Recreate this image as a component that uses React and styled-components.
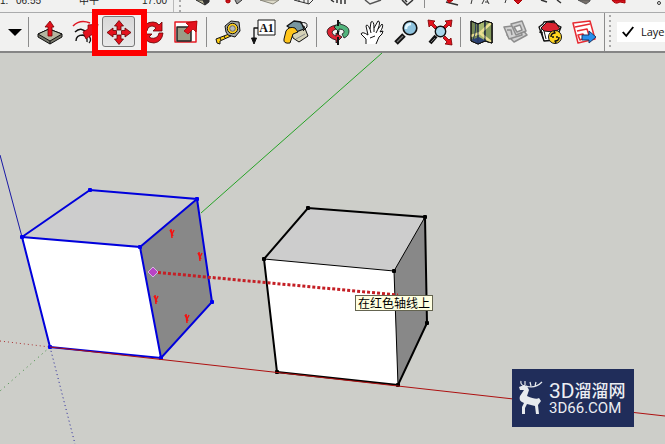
import styled, { createGlobalStyle } from 'styled-components';

const GlobalStyle = createGlobalStyle`
  * {
    box-sizing: border-box;
  }

  body {
    margin: 0;
    background-color: #cdcec9;
    font-family: "Liberation Sans", "Noto Sans CJK SC", sans-serif;
  }
`;

const Window = styled.div`
  min-height: 100vh;
  display: flex;
  flex-direction: column;
  overflow: hidden;
`;

const TopStrip = styled.div`
  height: 13px;
  display: flex;
  align-items: flex-end;
  overflow: hidden;
  background-color: #f1f1f0;
  border-bottom: 1px solid #aaabac;
`;

const TimeScale = styled.div`
  width: 174px;
  height: 12px;
  padding-bottom: 5px;
  flex-shrink: 0;

  display: grid;
  grid-template-columns: 16px 63px 63px auto;
  grid-auto-rows: 12px;
  align-content: end;

  border-right: 1px solid #b9b9b9;
  color: #222;
  font-size: 10px;
  line-height: 12px;
`;

const StripIcons = styled.svg`
  width: 480px;
  height: 12px;
  margin-left: 11px;
  flex-shrink: 0;
`;

const Toolbar = styled.div`
  height: 40px;
  display: flex;
  align-items: center;
  background-color: #f1f1f0;
  border-bottom: 2px solid #858585;
`;

const Separator = styled.div`
  width: 1px;
  height: ${(props) => (props.$full ? '38px' : '30px')};
  margin: 0px 4px 0px 3px;
  flex-shrink: 0;
  background-color: #8c8c8c;
`;

const Grip = styled.div`
  width: 2px;
  height: ${(props) => (props.$short ? '12px' : '34px')};
  margin-left: ${(props) => (props.$short ? '5px' : '0px')};
  flex-shrink: 0;
  background: repeating-linear-gradient(#aaa 0px 2px, #f1f1f0 2px 5px);
`;

const ToolBtn = styled.button`
  width: 34px;
  height: 34px;
  padding: 0px;
  flex-shrink: 0;
  position: relative;

  display: flex;
  justify-content: center;
  align-items: center;

  border: none;
  background-color: transparent;
  cursor: pointer;

  svg {
    width: 28px;
    height: 28px;
    overflow: visible;
  }
`;

const ArrowBtn = styled(ToolBtn)`
  width: 25px;
  padding-left: 5px;

  svg {
    width: 14px;
    height: 8px;
  }
`;

const ActiveBtn = styled(ToolBtn)`
  padding-left: 2px;

  &::before {
    content: '';
    position: absolute;
    inset: 1px 0px 2px 1px;
    border: 1px solid #777;
    border-radius: 3px;
    background: linear-gradient(#d8d8d8, #e8e8e8);
  }

  svg {
    position: relative;
  }
`;

const Highlight = styled.span`
  position: absolute;
  inset: -6px -12px -7px -9px;
  z-index: 1;
  border: 6px solid #fe0000;
`;

const LayerBox = styled.label`
  height: 20px;
  margin-left: 6px;
  padding-left: 5px;
  flex: 1;
  min-width: 0;
  overflow: hidden;

  display: flex;
  align-items: center;
  gap: 7px;

  background-color: white;
  color: #111;
  font-family: "Open Sans", sans-serif;
  font-size: 11px;
  line-height: 20px;
`;

const TickBox = styled.input`
  appearance: none;
  width: 12px;
  height: 12px;
  margin: 0px;
  flex-shrink: 0;

  &:checked::before {
    content: '';
    display: block;
    width: 12px;
    height: 12px;
    background-color: black;
    clip-path: polygon(0% 55%, 14% 45%, 34% 70%, 88% 4%, 100% 12%, 36% 94%);
  }
`;

const Viewport = styled.main`
  position: relative;
  flex: 1;
  overflow: hidden;
`;

const Scene = styled.svg`
  width: 100%;
  height: auto;
  display: block;
`;

const Tooltip = styled.div.attrs({ role: 'tooltip' })`
  position: absolute;
  top: 242px;
  left: 355px;
  padding: 0px 2px;
  border: 1px solid #646450;
  background-color: #ffffe1;
  color: black;
  font-family: "Noto Sans CJK SC", sans-serif;
  font-size: 12px;
  line-height: 14px;
  white-space: nowrap;
`;

const Watermark = styled.div`
  position: absolute;
  right: 31px;
  bottom: 17px;
  width: 122px;
  height: 58px;
  padding-left: 5px;

  display: flex;
  align-items: center;
  gap: 5px;

  background-color: #202d5a;
  color: #eceef2;

  svg {
    width: 27px;
    height: 36px;
    flex-shrink: 0;
  }
`;

const Brand = styled.div`
  padding-top: 2px;
  font-family: Roboto, "Noto Sans CJK SC", sans-serif;
  white-space: nowrap;
`;

const BrandName = styled.div`
  display: flex;
  align-items: center;
  font-size: 17px;
  font-weight: 500;
  line-height: 18px;
`;

const BrandLatin = styled.span`
  font-size: 21px;
  font-weight: 400;
`;

const BrandUrl = styled.div`
  font-size: 15px;
  line-height: 16px;
`;

const Icon = ({ children }) => (
  <svg viewBox="0 0 28 28" fill="none" stroke="#111" strokeWidth="1" strokeLinejoin="round">
    {children}
  </svg>
);

const PushPull = () => (
  <Icon>
    <path d="M2 16 13 11 26 16V19L14 26 2 19Z" fill="#77776a" />
    <path d="M2 16 13 11 26 16 14 23Z" fill="#b5b5a0" />
    <path d="M14 23V26" />
    <path d="M12 18V9H9L14 3 18 9H16V18Z" fill="#e3121d" stroke="#700" strokeWidth="0.8" />
  </Icon>
);

const FollowMe = () => (
  <Icon>
    <path d="M3 8Q10 1 20 5" stroke="#df1722" strokeWidth="1.6" />
    <path d="M5 14Q11 8 17 15T19 25M6 23Q6 17 13 17Q18 19 17 24" strokeWidth="1.4" />
    <path d="M13 14 18 11 18 7 28 6 26 17 21 17 16 21Z" fill="#e3121d" stroke="#8a0008" strokeWidth="0.8" />
  </Icon>
);

const Move = () => (
  <Icon>
    <g fill="#e3121d" stroke="#600" strokeWidth="0.8">
      <path d="M12 12V8H9.500L14 2.500 18.500 8H16V12Z" />
      <path d="M12 17V21H9.500L14 26.500 18.500 21H16V17Z" />
      <path d="M11.500 12.500H8V10L2 14.500 8 19V16.500H11.500Z" />
      <path d="M16.500 12.500H20V10L26 14.500 20 19V16.500H16.500Z" />
    </g>
  </Icon>
);

const Rotate = () => (
  <Icon>
    <g fill="#e3121d" stroke="#600" strokeWidth="0.8">
      <path d="M5 13Q6 4 15 4Q19 4 21 7L24 4V13H15L18 10Q14 6 10 10L9 13Z" />
      <path d="M25 15Q24 24 16 25Q11 25 8 22L5 25V16H14L11 19Q16 22 20 18L21 15Z" />
    </g>
  </Icon>
);

const Scale = () => (
  <Icon>
    <path d="M3 4H24V24H3Z" fill="#fff" stroke="#e51b24" strokeWidth="1.5" />
    <path d="M5 9H19V23H5Z" fill="#9b9c86" stroke="#222" strokeWidth="1.5" />
    <path d="M12 13 17 8 14 5 25 3 24 14 21 11 16 16Z" fill="#e3121d" stroke="#a00" strokeWidth="0.8" />
  </Icon>
);

const Tape = () => (
  <Icon>
    <path d="M2 21 15 16 17 18 6 23 6 26 3 25Z" fill="#ffcf16" />
    <path d="M6 20 7 22M10 18 11 20" />
    <path d="M11 8 17 3 25 4 26 13 21 19 14 17 12 14Z" fill="#a6aaa8" />
    <circle cx="18.500" cy="10.500" r="5.200" fill="#ffcf16" />
    <circle cx="18.500" cy="10.500" r="2.800" fill="#b5b9bb" stroke="#666" />
  </Icon>
);

const TextTool = () => (
  <Icon>
    <path d="M10 2H27V17H10Z" fill="#fff" />
    <path d="M10 10H6V21" strokeWidth="1.3" />
    <path d="M3.500 20H8.500L6 26Z" fill="#111" />
    <text x="18.500" y="14" textAnchor="middle" fill="#111" stroke="none" fontFamily="Liberation Serif, serif" fontSize="12" fontWeight="bold">A1</text>
  </Icon>
);

const Paint = () => (
  <Icon>
    <path d="M9 12 22 8 26 18 17 24 11 20Z" fill="#d5d2b6" />
    <path d="M5 8 12 3 19 4 22 11 14 14Z" fill="#7897a0" strokeWidth="1.3" />
    <path d="M18 5Q26 3 25 9L21 13" />
    <path d="M4 13Q7 8 13 10L16 14 11 16 8 25Q1 26 2 21Z" fill="#ffc51b" />
    <path d="M14 21 23 16" stroke="#888" />
  </Icon>
);

const Orbit = () => (
  <Icon>
    <path d="M14 2V27" strokeWidth="2" />
    <path d="M12 7Q3 9 3 14Q4 20 12 22V25L18 19 12 15V18Q8 17 8 14Q9 12 12 11Z" fill="#dc2332" strokeWidth="0.8" />
    <path d="M16 6Q25 8 25 13Q25 18 20 20L18 16Q21 15 20 13Q19 11 15 11V14L10 9 16 4Z" fill="#51b47c" strokeWidth="0.8" />
    <path d="M14 2V8M14 19V27" strokeWidth="2" />
  </Icon>
);

const Pan = () => (
  <Icon>
    <path d="M8 26 8 21 3 16Q4 13 10 17L8 8Q9 5 12 11L13 4Q16 2 16 10L20 3Q23 3 20 11L24 6Q26 8 22 14L25 13Q25 16 21 19L18 26" fill="#fff" />
    <path d="M12 11 13 15M16 10V14M20 11 18 15M12 20 17 18" />
  </Icon>
);

const Zoom = () => (
  <Icon>
    <path d="M12 17 4 25" strokeWidth="5" />
    <path d="M11 18 5 24" stroke="#777" strokeWidth="1.5" />
    <circle cx="18" cy="10" r="6.800" fill="#8fc3de" strokeWidth="1.600" />
    <path d="M14 11Q14 6 19 6" stroke="#e4f8ff" strokeWidth="2.500" />
  </Icon>
);

const ZoomExtents = () => (
  <Icon>
    <g fill="#e3121d" stroke="#700" strokeWidth="0.8">
      <path d="M2 2 9 3 7 5 11 9 9 11 5 7 3 9Z" />
      <path d="M26 2 19 3 21 5 17 9 19 11 23 7 25 9Z" />
      <path d="M26 27 19 26 21 24 17 20 19 18 23 22 25 20Z" />
    </g>
    <path d="M10 18 4 25" strokeWidth="4" />
    <path d="M9 20 5 24" stroke="#777" />
    <circle cx="14.500" cy="13.500" r="5.200" fill="#a9d7eb" strokeWidth="1.400" />
  </Icon>
);

const MapIcon = () => (
  <Icon>
    <path d="M3 3 10 6 17 3 24 5V25L17 23 10 26 3 23Z" fill="#758754" />
    <path d="M10 6 17 3V23L10 26Z" fill="#a5b66f" />
    <path d="M17 3 24 5V25L17 23Z" fill="#83995c" />
    <path d="M23 5 12 15 23 24M3 18 12 15" stroke="#eadf91" strokeWidth="2.500" />
    <path d="M3 22 11 19 20 24 17 23 10 26Z" fill="#2c4274" stroke="none" />
    <path d="M7 4Q9 11 5 22M10 6V26M17 3V23" stroke="#26375c" />
    <path d="M3 3 10 6 17 3 24 5V25L17 23 10 26 3 23Z" />
  </Icon>
);

const Layouts = () => (
  <Icon>
    <g fill="#d2d2d2" stroke="#8d8d8d" strokeWidth="1.500">
      <path d="M5 17 19 10 25 17 12 24Z" />
      <path d="M2 9 17 7 20 17 7 21Z" />
      <path d="M9 6 20 3 24 13 14 17Z" />
      <path d="M12 9 18 7 20 12 15 14Z" fill="#f1f1f0" />
      <path d="M5 12H9L10 17" />
    </g>
  </Icon>
);

const Warehouse = () => (
  <Icon>
    <path d="M3 9 7 6 8 4 18 3 19 6 25 9 20 22 8 23Z" fill="#fff" strokeWidth="1.300" />
    <path d="M5 10 11 4 20 5 24 11 18 14 8 13Z" fill="#da2331" />
    <path d="M5 11 8 23M8 13 10 21M3 14 7 15" />
    <circle cx="19" cy="19" r="6.500" fill="#ffd51f" />
    <path d="M15 19Q15 15 19 15L18 13M23 19Q23 23 19 23L20 25M16 19H18M20 19H22" strokeWidth="1.500" />
  </Icon>
);

const SendLayout = () => (
  <Icon>
    <path d="M3 5 20 3 25 21 8 25Z" fill="#fff" stroke="#e72a31" strokeWidth="1.500" />
    <path d="M5 9 20 6M7 13 17 11 19 17M8 17 13 16 15 20 10 22Z" stroke="#e72a31" strokeWidth="1.600" />
    <path d="M12 17H19V13L26 19 19 25V22H12Z" fill="#2790ed" stroke="#173b69" />
  </Icon>
);

const tools = [
  [
    { name: 'Push/Pull', Art: PushPull },
    { name: 'Follow Me', Art: FollowMe },
    { name: 'Move', Art: Move, active: true },
    { name: 'Rotate', Art: Rotate },
    { name: 'Scale', Art: Scale },
  ],
  [
    { name: 'Tape Measure', Art: Tape },
    { name: 'Text', Art: TextTool },
    { name: 'Paint Bucket', Art: Paint },
  ],
  [
    { name: 'Orbit', Art: Orbit },
    { name: 'Pan', Art: Pan },
    { name: 'Zoom', Art: Zoom },
    { name: 'Zoom Extents', Art: ZoomExtents },
  ],
  [
    { name: 'Add Location', Art: MapIcon },
    { name: 'Get Models', Art: Layouts },
    { name: 'Extension Warehouse', Art: Warehouse },
    { name: 'Send to LayOut', Art: SendLayout },
  ],
];

const ToolGroup = ({ items }) => (
  <>
    {items.map(({ name, Art, active }) =>
      active ? (
        <ActiveBtn key={name} aria-label={name} aria-pressed="true">
          <Art />
          <Highlight />
        </ActiveBtn>
      ) : (
        <ToolBtn key={name} aria-label={name}>
          <Art />
        </ToolBtn>
      )
    )}
  </>
);

// lower edges of the icons in the row above
const StripArt = () => (
  <StripIcons viewBox="192 0 480 12" fill="none" stroke="#333" strokeWidth="1">
    <path d="M196 0 205 5 209 0Z" fill="#b9b596" />
    <path d="M203 0 205 5 209 2V0Z" fill="#333" />
    <path d="M226 0V2Q228 4 230 2V0Z" fill="#d31421" stroke="#a00" />
    <path d="M235 0 237 4 242 0" fill="#999" />
    <path d="M260 0 273 4 279 0Z" fill="#dcd9c8" stroke="#88867a" />
    <path d="M294 0 309 4 313 0M299 0V2M304 0V3M308 0V4" />
    <path d="M331 0 334 2M337 0V3M341 0V4M345 0V4" strokeWidth="1.500" />
    <path d="M365 0 370 4 381 0" stroke="#555" strokeWidth="1.500" />
    <path d="M402 0 407 5 413 0M405 0 407 2" strokeWidth="1.500" />
    <path d="M424.500 0V8" stroke="#8c8c8c" />
    <path d="M446 2 458 5" strokeWidth="1.500" />
    <path d="M447 0 449 3 453 0Z" fill="#d31421" stroke="#a00" />
    <path d="M472 0 471 4M484 0 482 4M487 0 489 4M485 2H488" />
    <path d="M506 0 505 3" />
    <path d="M514 0 518 4 522 0Z" fill="#d31421" stroke="#a00" />
    <path d="M541 0 547 2M557 0 561 3" strokeWidth="1.500" />
    <path d="M578 0 586 4 590 1V0Z" fill="#77706a" stroke="#555" />
    <path d="M612 0Q615 5 620 2L625 3V0Z" fill="#d31421" stroke="#a00" />
    <circle cx="659" cy="3" r="1.500" />
  </StripIcons>
);

const Corners = ({ points, color }) => (
  <g fill={color}>
    {points.map(([x, y]) => (
      <rect key={`${x}-${y}`} x={x - 2} y={y - 2} width="4" height="4" rx="1" />
    ))}
  </g>
);

const Model = () => (
  <Scene viewBox="0 53 665 391" fill="none">
    <path d="M382 53 201 213" stroke="#26a326" />
    <path d="M0 155 22 237" stroke="#1919a5" />
    <path d="M0 341 50 347" stroke="#a33" strokeDasharray="1 3" />
    <path d="M50 347 0 391" stroke="#388838" strokeDasharray="1 4" />
    <path d="M50 347 75 444" stroke="#22229a" strokeDasharray="1 3" />

    <path d="M22 237 90 190 197 199 140 247Z" fill="#cdcdcd" />
    <path d="M22 237 140 247 161 358 50 347Z" fill="#fff" />
    <path d="M140 247 197 199 212 302 161 358Z" fill="#888" />
    <path d="M22 237 90 190 197 199 212 302 161 358 50 347ZM22 237 140 247 161 358M140 247 197 199" stroke="#0000dc" strokeWidth="2" />
    <Corners color="#0000f0" points={[[22, 237], [90, 190], [197, 199], [212, 302], [161, 358], [50, 347], [140, 247]]} />

    <path d="M264 259 308 208 425 217 394 271Z" fill="#cdcdcd" />
    <path d="M264 259 394 271 398 385 277 372Z" fill="#fff" />
    <path d="M394 271 425 217 427 323 398 385Z" fill="#888" />
    <path d="M264 259 308 208 425 217 427 323 398 385 277 372Z" stroke="#000" strokeWidth="2" />
    <path d="M264 259 394 271 398 385M394 271 425 217" stroke="#000" />
    <Corners color="#000" points={[[264, 259], [308, 208], [425, 217], [427, 323], [398, 385], [277, 372], [394, 271]]} />

    <path d="M50 347 665 416" stroke="#ad1010" />
    <path d="M153 272 398 295" stroke="#c41f25" strokeWidth="3" strokeDasharray="3 2" />
    <path d="M153 267 158 272 153 277 148 272Z" fill="#b844c5" stroke="#d5b6df" />
    <g stroke="#f51111" strokeWidth="1.500">
      {[[172, 233], [200, 256], [156, 299], [187, 318]].map(([x, y]) => (
        <path key={x} transform={`translate(${x} ${y})`} d="M-1-4 0 5M2-3 0 1M-2-3 1 3" />
      ))}
    </g>
  </Scene>
);

const Deer = () => (
  <svg viewBox="0 0 27 36" fill="none">
    <path d="M2 7 7 5 10 6 12 10 10 16Q19 20 22 18L24 21 21 25 22 34H19L18 26 10 24 8 28V34H5L5 27 7 23Q1 21 3 16L7 10 3 10Z" fill="#e7eaee" />
    <path d="M8 6Q3 5 4 1M9 6Q18 9 25 2M14 6 13 2M18 6 19 2M8 5 8 1" stroke="#e7eaee" strokeWidth="1.200" />
  </svg>
);

const App = () => {
  return (
    <Window>
      <GlobalStyle />
      <TopStrip>
        <TimeScale>
          <span>1:</span>
          <span>06:55</span>
          <span>中午</span>
          <span>17:00</span>
        </TimeScale>
        <Grip $short />
        <StripArt />
      </TopStrip>
      <Toolbar>
        <ArrowBtn aria-label="More styles">
          <svg viewBox="0 0 14 8"><path d="M0 1H14L7 8Z" /></svg>
        </ArrowBtn>
        <Separator />
        <ToolGroup items={tools[0]} />
        <Separator />
        <ToolGroup items={tools[1]} />
        <Separator />
        <ToolGroup items={tools[2]} />
        <Separator />
        <ToolGroup items={tools[3]} />
        <Separator $full />
        <Grip />
        <LayerBox>
          <TickBox type="checkbox" defaultChecked />
          Layer
        </LayerBox>
      </Toolbar>
      <Viewport>
        <Model />
        <Tooltip>在红色轴线上</Tooltip>
        <Watermark>
          <Deer />
          <Brand>
            <BrandName><BrandLatin>3D</BrandLatin>溜溜网</BrandName>
            <BrandUrl>3D66.COM</BrandUrl>
          </Brand>
        </Watermark>
      </Viewport>
    </Window>
  );
};

export default App;
